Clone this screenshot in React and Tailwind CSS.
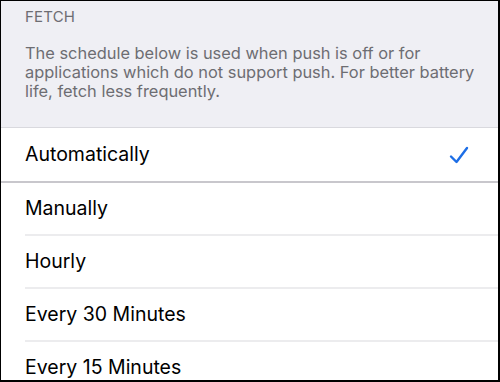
const options = [
  "Automatically",
  "Manually",
  "Hourly",
  "Every 30 Minutes",
  "Every 15 Minutes",
];

function Checkmark() {
  return (
    <svg width="20" height="18" viewBox="0 0 20 18" fill="none">
      <path
        d="M2 10.5 L7.5 16 L18 2"
        stroke="#1d6ee6"
        strokeWidth="2.4"
        strokeLinecap="round"
        strokeLinejoin="round"
      />
    </svg>
  );
}

export default function App() {
  return (
    <div
      className="w-[500px] h-[382px] overflow-hidden bg-white border-l border-t border-r-2 border-b-2 border-black"
      style={{ fontFamily: "Inter, 'Liberation Sans', sans-serif" }}
    >
      {/* section header */}
      <div className="bg-[#efeff4] h-[127px] pl-[24px] pr-[10px] pt-[7px] border-b border-[#d9d9de]">
        <div className="text-[15px] leading-[18px] text-[#6d6d72] tracking-[0.2px]">FETCH</div>
        <p className="mt-[18px] text-[16.4px] leading-[19px] text-[#6d6d72] whitespace-nowrap">
          The schedule below is used when push is off or for
          <br />
          applications which do not support push. For better battery
          <br />
          life, fetch less frequently.
        </p>
      </div>

      {/* options */}
      <div className="flex flex-col">
        {options.map((opt, i) =>
          i === 0 ? (
            <div
              key={opt}
              className="h-[55px] flex items-center justify-between pl-[24px] pr-[29px] border-b-2 border-[#c8c7cc]"
            >
              <span className="text-[19.5px] text-black">{opt}</span>
              <Checkmark />
            </div>
          ) : (
            <div key={opt} className="h-[53px] flex pl-[24px]">
              <div className="flex-1 flex items-center h-full border-b-2 border-[#ececee]">
                <span className="text-[19.5px] text-black">{opt}</span>
              </div>
            </div>
          )
        )}
      </div>
    </div>
  );
}
